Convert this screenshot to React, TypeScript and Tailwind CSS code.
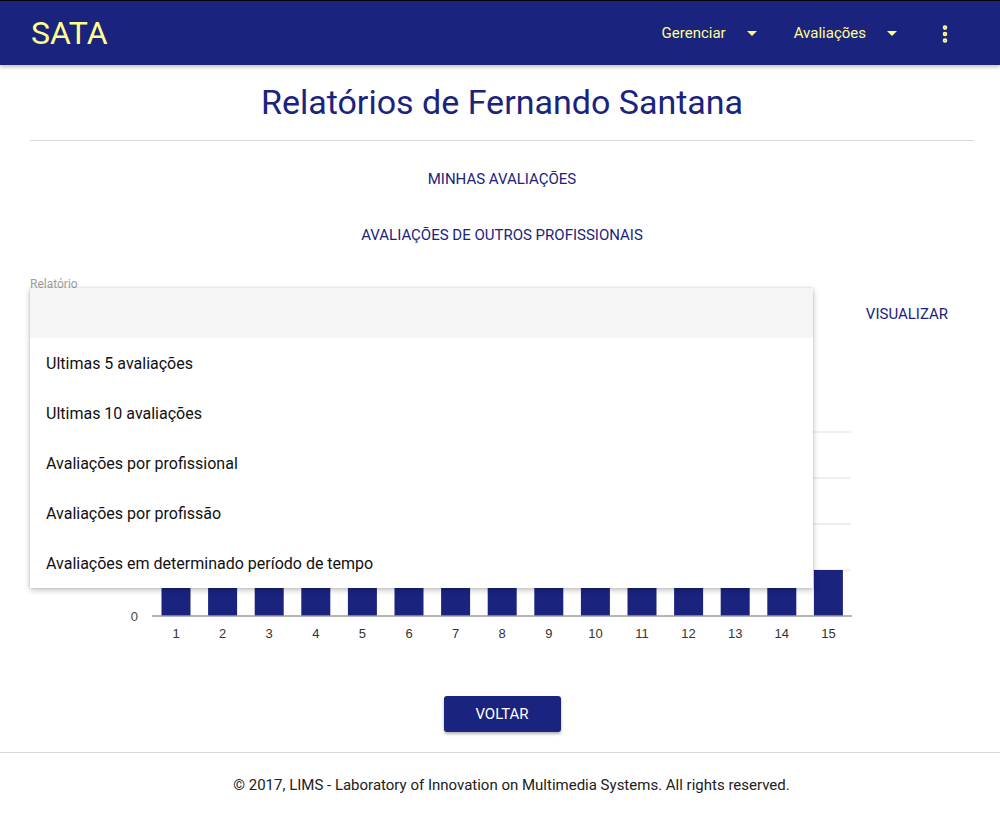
import { MoreVertical } from 'lucide-react';

const navy = '#1a237e';

const menuItems = [
  'Ultimas 5 avaliações',
  'Ultimas 10 avaliações',
  'Avaliações por profissional',
  'Avaliações por profissão',
  'Avaliações em determinado período de tempo',
];

// values are mostly hidden behind the open menu
const values = [3, 2, 3, 1, 2, 3, 2, 1, 3, 2, 3, 2, 1, 2, 1];

const Caret = () => (
  <svg width="10" height="5" viewBox="0 0 10 5" className="ml-[21px]">
    <path d="M0 0h10L5 5z" fill="#ffff8d" />
  </svg>
);

const Chart = () => {
  const base = 236;
  const step = 46;
  return (
    <svg width="940" height="270" className="block">
      {[1, 2, 3, 4].map((v) => (
        <line key={v} x1="122" x2="821" y1={base - v * step} y2={base - v * step} stroke="#e0e0e0" strokeWidth="1" />
      ))}
      {values.map((v, i) => {
        const cx = 146 + i * 46.6;
        return (
          <g key={i}>
            <rect x={cx - 14.5} y={base - v * step} width="29" height={v * step} fill={navy} />
            <text x={cx} y="258" textAnchor="middle" fontSize="13" fill="#333" fontFamily="Arial, sans-serif">
              {i + 1}
            </text>
          </g>
        );
      })}
      <line x1="122" x2="822" y1={base} y2={base} stroke="#9e9e9e" strokeWidth="1.5" />
      <text x="108" y="241" textAnchor="end" fontSize="13" fill="#444" fontFamily="Arial, sans-serif">
        0
      </text>
    </svg>
  );
};

export default function App() {
  return (
    <div className="min-h-[832px] bg-white font-['Roboto',sans-serif]">
      <header
        className="h-[65px] border-t border-black flex items-center pl-[31px] pr-[44px] shadow-[0_2px_4px_rgba(0,0,0,0.25)] relative z-10"
        style={{ backgroundColor: navy }}
      >
        <span className="text-[32px] text-[#ffff8d] leading-none">SATA</span>
        <nav className="ml-auto flex items-center pt-[1px] text-[15px] text-[#ffff8d]">
          <span className="flex items-center">
            Gerenciar
            <Caret />
          </span>
          <span className="flex items-center ml-[37px]">
            Avaliações
            <Caret />
          </span>
          <MoreVertical size={22} strokeWidth={3} className="ml-[37px] text-[#ffff8d]" />
        </nav>
      </header>

      <main className="pl-[30px] pr-[26px]">
        <h1 className="mt-[17px] text-center text-[34px] leading-[40px] text-[#1a237e]">
          Relatórios de Fernando Santana
        </h1>
        <hr className="mt-[18px] border-t border-[#d6d6d6]" />

        <div className="flex flex-col items-center gap-[20px] mt-[20px]">
          <button className="h-[36px] px-4 text-[15px] uppercase text-[#1a237e]">Minhas avaliações</button>
          <button className="h-[36px] px-4 text-[15px] uppercase text-[#1a237e]">
            Avaliações de outros profissionais
          </button>
        </div>

        <div className="relative mt-[23px] flex">
          <div className="w-[783px]">
            <div className="text-[12px] leading-[16px] text-[#9e9e9e]">Relatório</div>
            <div className="h-[48px] border-b border-[#bdbdbd]" />
          </div>
          <div className="ml-auto mr-[10px] h-[36px] mt-[20px] px-4 flex items-center text-[15px] text-[#1a237e]">
            VISUALIZAR
          </div>

          <ul className="absolute left-0 top-[12px] w-[783px] bg-white shadow-[0_2px_6px_rgba(0,0,0,0.25),0_0_2px_rgba(0,0,0,0.12)] z-20">
            <li className="h-[50px] bg-[#f5f5f5]" />
            {menuItems.map((item) => (
              <li key={item} className="h-[50px] flex items-center px-[16px] pt-[2px] text-[16px] text-[#111]">
                {item}
              </li>
            ))}
          </ul>
        </div>

        <div className="mt-[40px]">
          <Chart />
        </div>

        <div className="flex justify-center mt-[46px]">
          <button
            className="w-[117px] h-[36px] rounded-[3px] pt-[1px] text-white text-[15px] shadow-[0_2px_3px_rgba(0,0,0,0.3)]"
            style={{ backgroundColor: navy }}
          >
            VOLTAR
          </button>
        </div>
      </main>

      <footer className="mt-[20px] border-t border-[#d6d6d6] h-[64px] flex items-center justify-center pl-[23px] pt-[2px] text-[15px] text-[#212121]">
        © 2017, LIMS - Laboratory of Innovation on Multimedia Systems. All rights reserved.
      </footer>
    </div>
  );
}
